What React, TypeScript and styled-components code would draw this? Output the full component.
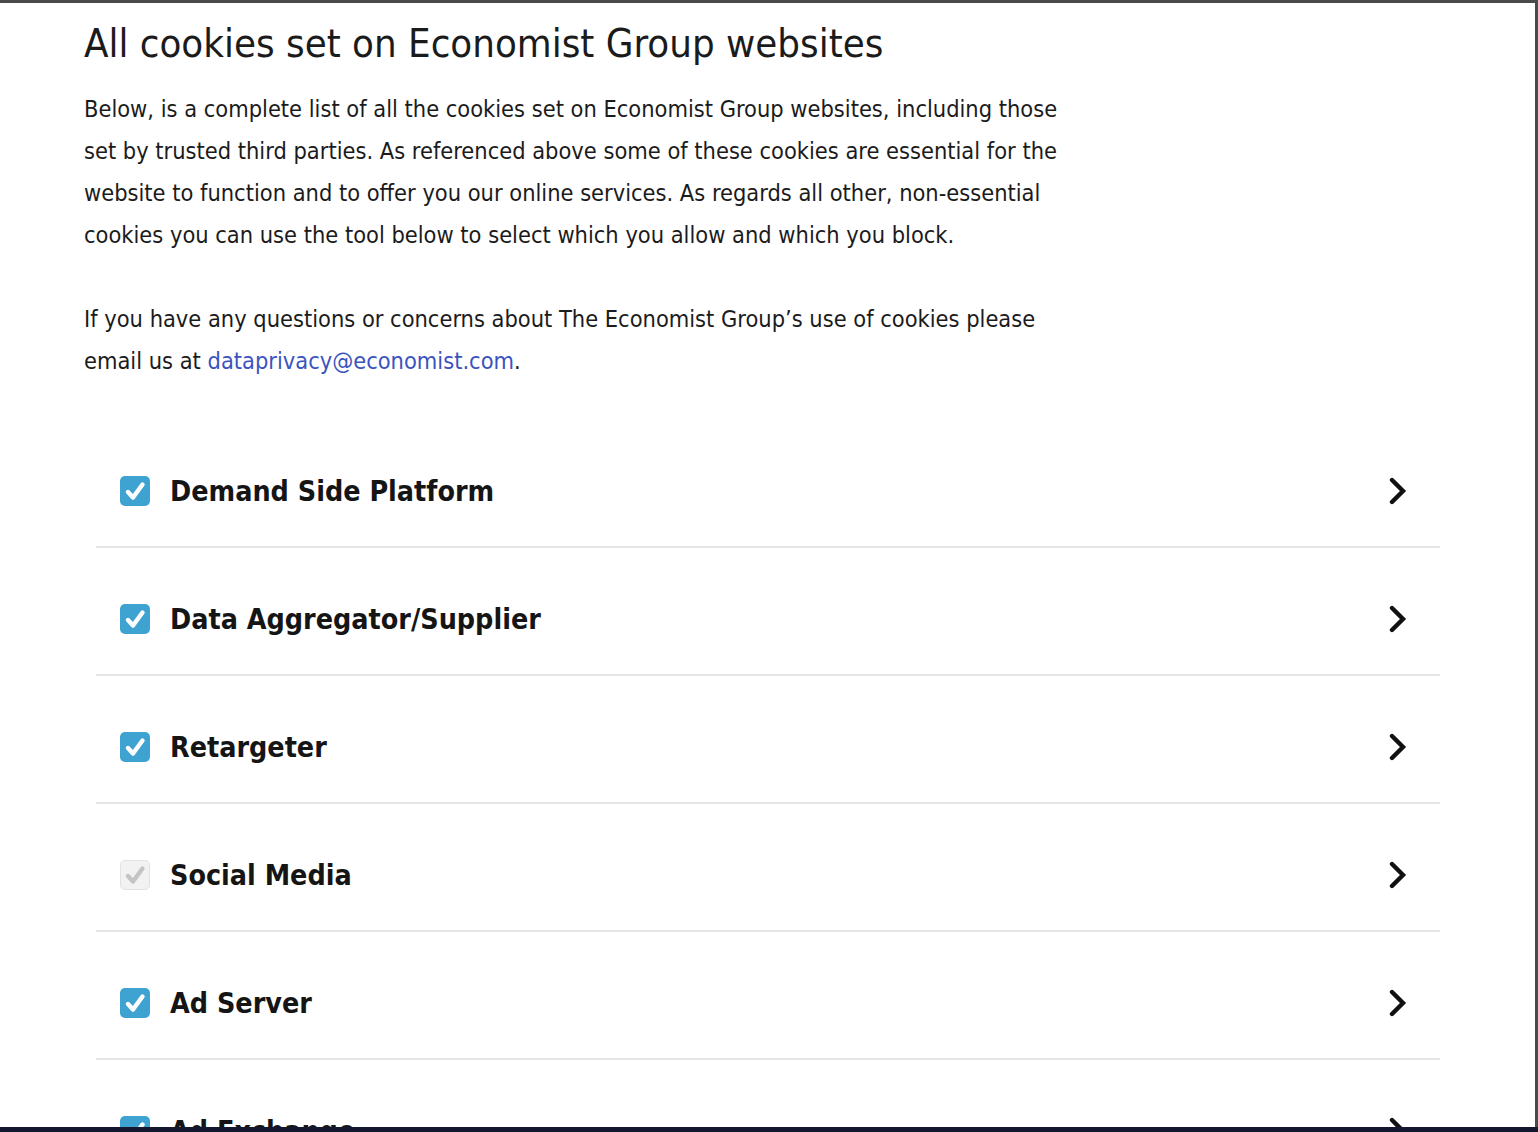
import React from 'react';
import styled, { createGlobalStyle } from 'styled-components';

const GlobalStyle = createGlobalStyle`
    html, body {
        margin: 0;
        padding: 0;
        background: #4a4a4a;
        overflow: hidden;
    }
`

const Frame = styled.div`
    width: 1538px;
    height: 1132px;
    display: flex;
    flex-direction: column;
`

const Panel = styled.div`
    margin: 3px 3px 0 0;
    height: 1124px;
    background: #ffffff;
    overflow: hidden;
    font-family: "DejaVu Sans Condensed", "DejaVu Sans", sans-serif;
    font-stretch: condensed;
    color: #1b1b1b;
`

const BottomBar = styled.div`
    height: 5px;
    background: #14172e;
`

const Intro = styled.div`
    padding: 14px 0 0 84px;
    width: 990px;
`

const Title = styled.h2`
    margin: 0 0 19px;
    font-size: 39.8px;
    line-height: 52px;
    font-weight: normal;
    color: #1b1b1b;
`

const Paragraph = styled.p`
    margin: 0 0 42px;
    font-size: 23.4px;
    line-height: 42px;
    &:last-of-type {
        margin-bottom: 38px;
    }
    a {
        color: #3a53bf;
        text-decoration: none;
    }
`

const List = styled.div`
    display: flex;
    flex-direction: column;
    margin: 0 95px 0 96px;
`

const Row = styled.div`
    display: flex;
    align-items: center;
    height: 40px;
    padding: 51px 0 35px 24px;
    border-bottom: 2px solid #e6e6e6;
`

const Check = styled.span<{ $disabled?: boolean }>`
    width: 30px;
    height: 30px;
    flex: none;
    box-sizing: border-box;
    border-radius: 5px;
    display: flex;
    align-items: center;
    justify-content: center;
    background: ${p => p.$disabled ? '#f2f2f2' : '#3fa3d2'};
    border: ${p => p.$disabled ? '1px solid #e2e2e2' : 'none'};
`

const Label = styled.span`
    margin-left: 20px;
    font-size: 28.4px;
    font-weight: bold;
    color: #151515;
    flex: 1;
`

const Chevron = styled.span`
    width: 20px;
    height: 28px;
    margin-right: 32px;
    display: flex;
`

const CheckMark = ({ color }: { color: string }) => (
    <svg width="24" height="24" viewBox="0 0 24 24">
        <path d="M5 13 L10 18.5 L19.5 5.5" fill="none" stroke={color} strokeWidth="4.4" strokeLinecap="round" strokeLinejoin="round" />
    </svg>
)

const categories = [
    { name: 'Demand Side Platform', on: true },
    { name: 'Data Aggregator/Supplier', on: true },
    { name: 'Retargeter', on: true },
    { name: 'Social Media', on: false },
    { name: 'Ad Server', on: true },
    { name: 'Ad Exchange', on: true },
]

const App = () => {
    return (
        <Frame>
            <GlobalStyle />
            <Panel>
                <Intro>
                    <Title>All cookies set on Economist Group websites</Title>
                    <Paragraph>
                        Below, is a complete list of all the cookies set on Economist Group websites, including those set by trusted third parties. As referenced above some of these cookies are essential for the website to function and to offer you our online services. As regards all other, non-essential cookies you can use the tool below to select which you allow and which you block.
                    </Paragraph>
                    <Paragraph>
                        If you have any questions or concerns about The Economist Group’s use of cookies please email us at <a href="#">dataprivacy@economist.com</a>.
                    </Paragraph>
                </Intro>
                <List>
                    {categories.map(c => (
                        <Row key={c.name}>
                            <Check $disabled={!c.on}>
                                <CheckMark color={c.on ? '#ffffff' : '#c4c4c4'} />
                            </Check>
                            <Label>{c.name}</Label>
                            <Chevron>
                                <svg width="20" height="28" viewBox="0 0 20 28">
                                    <path d="M4 3 L15 14 L4 25" fill="none" stroke="#111111" strokeWidth="4.4" strokeLinecap="round" strokeLinejoin="miter" />
                                </svg>
                            </Chevron>
                        </Row>
                    ))}
                </List>
            </Panel>
            <BottomBar />
        </Frame>
    )
}

export default App;
